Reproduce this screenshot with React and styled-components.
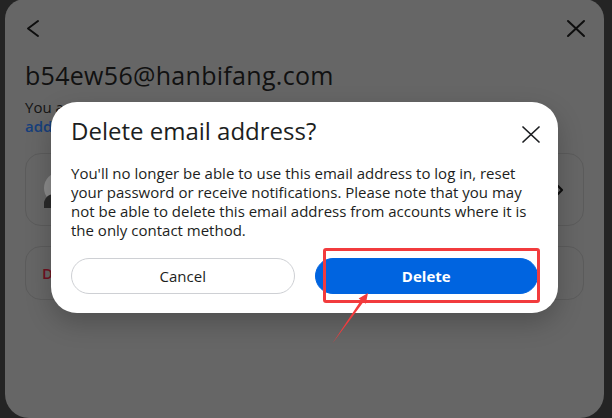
import React from 'react'
import styled, { createGlobalStyle } from 'styled-components'

const GlobalStyle = createGlobalStyle`
  html, body {
    margin: 0;
    padding: 0;
    background: #242424;
    overflow: hidden;
  }
  body {
    font-family: "Open Sans", "Noto Sans", "Liberation Sans", sans-serif;
  }
  * { box-sizing: border-box; }
`

const Stage = styled.div`
  position: relative;
  width: 612px;
  height: 418px;
  overflow: hidden;
  background: #242424;
  padding: 0 8px 0 5px;
  display: flex;
`

const Sheet = styled.div`
  flex: 1;
  height: 419px;
  margin-top: -1px;
  background: #666666;
  border-radius: 20px 20px 24px 24px;
  padding: 17px 20px 0 20px;
  display: flex;
  flex-direction: column;
`

const TopBar = styled.div`
  display: flex;
  justify-content: space-between;
  margin-right: -2px;
  color: #0e0e0e;
`

const IconBox = styled.svg`
  width: 24px;
  height: 24px;
  display: block;
`

const PageTitle = styled.h1`
  margin: 19px 0 0;
  font-size: 25px;
  line-height: 33px;
  font-weight: 500;
  letter-spacing: 0.3px;
  color: #111111;
`

const Note = styled.p`
  margin: 6px 0 0;
  font-size: 15px;
  line-height: 19px;
  color: #141414;
`

const NoteLink = styled.span`
  display: block;
  color: #163f7c;
  font-weight: 600;
`

const CardList = styled.div`
  margin-top: 17px;
  display: flex;
  flex-direction: column;
  gap: 20px;
`

const Card = styled.div`
  height: ${p => p.$h}px;
  border: 1px solid #5c5c5c;
  border-radius: 16px;
  padding: 0 15px 0 16px;
  display: flex;
  align-items: center;
  gap: 12px;
`

const CardText = styled.span`
  flex: 1;
  font-size: 15px;
  font-weight: 600;
  color: ${p => (p.$danger ? '#701020' : '#121212')};
`

const Backdrop = styled.div`
  position: absolute;
  inset: 0;
`

const Modal = styled.div`
  position: absolute;
  left: 51px;
  top: 102px;
  width: 507px;
  height: 211px;
  background: #ffffff;
  border-radius: 26px;
  padding: 16px 20px 19px;
  box-shadow: 0 10px 26px rgba(0, 0, 0, 0.22);
  display: flex;
  flex-direction: column;
`

const ModalHead = styled.div`
  display: flex;
  align-items: flex-start;
  justify-content: space-between;
`

const ModalTitle = styled.h2`
  margin: 0;
  font-size: 24px;
  line-height: 26px;
  font-weight: 500;
  color: #1c1e21;
`

const CloseButton = styled.button`
  border: 0;
  background: none;
  padding: 0;
  margin: 4px -3px 0 0;
  color: #1c1e21;
`

const Body = styled.p`
  margin: 18px 0 0;
  font-size: 15px;
  line-height: 19px;
  color: #1c1e21;
`

const Actions = styled.div`
  margin-top: auto;
  display: flex;
  gap: 20px;
`

const Button = styled.button`
  flex: 1;
  height: 36px;
  border-radius: 18px;
  font-family: inherit;
  font-size: 15px;
  font-weight: ${p => (p.$primary ? 700 : 500)};
  border: 1px solid ${p => (p.$primary ? '#0064e0' : '#ced0d4')};
  background: ${p => (p.$primary ? '#0064e0' : '#ffffff')};
  color: ${p => (p.$primary ? '#ffffff' : '#1c1e21')};
`

const Highlight = styled.div`
  position: absolute;
  left: 323px;
  top: 248px;
  width: 217px;
  height: 55px;
  border: 3px solid #f23b3d;
  border-radius: 3px;
`

const Pointer = styled.svg`
  position: absolute;
  left: 0;
  top: 0;
  width: 612px;
  height: 418px;
  pointer-events: none;
`

const ChevronLeft = () => (
  <IconBox viewBox="0 0 24 24" fill="none" stroke="currentColor" strokeWidth="2" strokeLinecap="round" strokeLinejoin="round">
    <polyline points="13,5 3,12.5 13,20" />
  </IconBox>
)

const Cross = ({ w = 1.8 }) => (
  <IconBox viewBox="0 0 24 24" fill="none" stroke="currentColor" strokeWidth={w} strokeLinecap="round">
    <line x1="6" y1="5" x2="22" y2="20" />
    <line x1="22" y1="5" x2="6" y2="20" />
  </IconBox>
)

const Avatar = () => (
  <svg width="36" height="36" viewBox="0 0 36 36" style={{ flex: 'none' }}>
    <circle cx="18" cy="16" r="16" fill="#8a8a8a" />
    <path d="M2 30 C4 24 8 22 12 22 L12 36 L2 36 Z" fill="#2a2a2a" />
  </svg>
)

const ChevronRight = () => (
  <svg width="16" height="16" viewBox="0 0 16 16" fill="none" stroke="#0e0e0e" strokeWidth="2.2" strokeLinecap="round" strokeLinejoin="round">
    <polyline points="6,4 10,8 6,12" />
  </svg>
)

export default function App() {
  return (
    <>
      <GlobalStyle />
      <Stage>
        <Sheet>
          <TopBar>
            <ChevronLeft />
            <Cross w={2} />
          </TopBar>
          <PageTitle>b54ew56@hanbifang.com</PageTitle>
          <Note>
            You are using this email address on the following accounts.
            <NoteLink>add another account</NoteLink>
          </Note>
          <CardList>
            <Card $h={73}>
              <Avatar />
              <CardText>Accounts</CardText>
              <ChevronRight />
            </Card>
            <Card $h={54}>
              <CardText $danger>Delete email address</CardText>
            </Card>
          </CardList>
        </Sheet>

        <Backdrop>
          <Modal>
            <ModalHead>
              <ModalTitle>Delete email address?</ModalTitle>
              <CloseButton aria-label="Close">
                <Cross w={1.7} />
              </CloseButton>
            </ModalHead>
            <Body>
              You'll no longer be able to use this email address to log in, reset
              your password or receive notifications. Please note that you may
              not be able to delete this email address from accounts where it is
              the only contact method.
            </Body>
            <Actions>
              <Button>Cancel</Button>
              <Button $primary>Delete</Button>
            </Actions>
          </Modal>
          <Highlight />
          <Pointer viewBox="0 0 612 418">
            <polygon
              points="332,344 361,300.3 358.6,298.6 368,293 365.8,303.7 363.4,302.1"
              fill="#f23b3d"
            />
          </Pointer>
        </Backdrop>
      </Stage>
    </>
  )
}
